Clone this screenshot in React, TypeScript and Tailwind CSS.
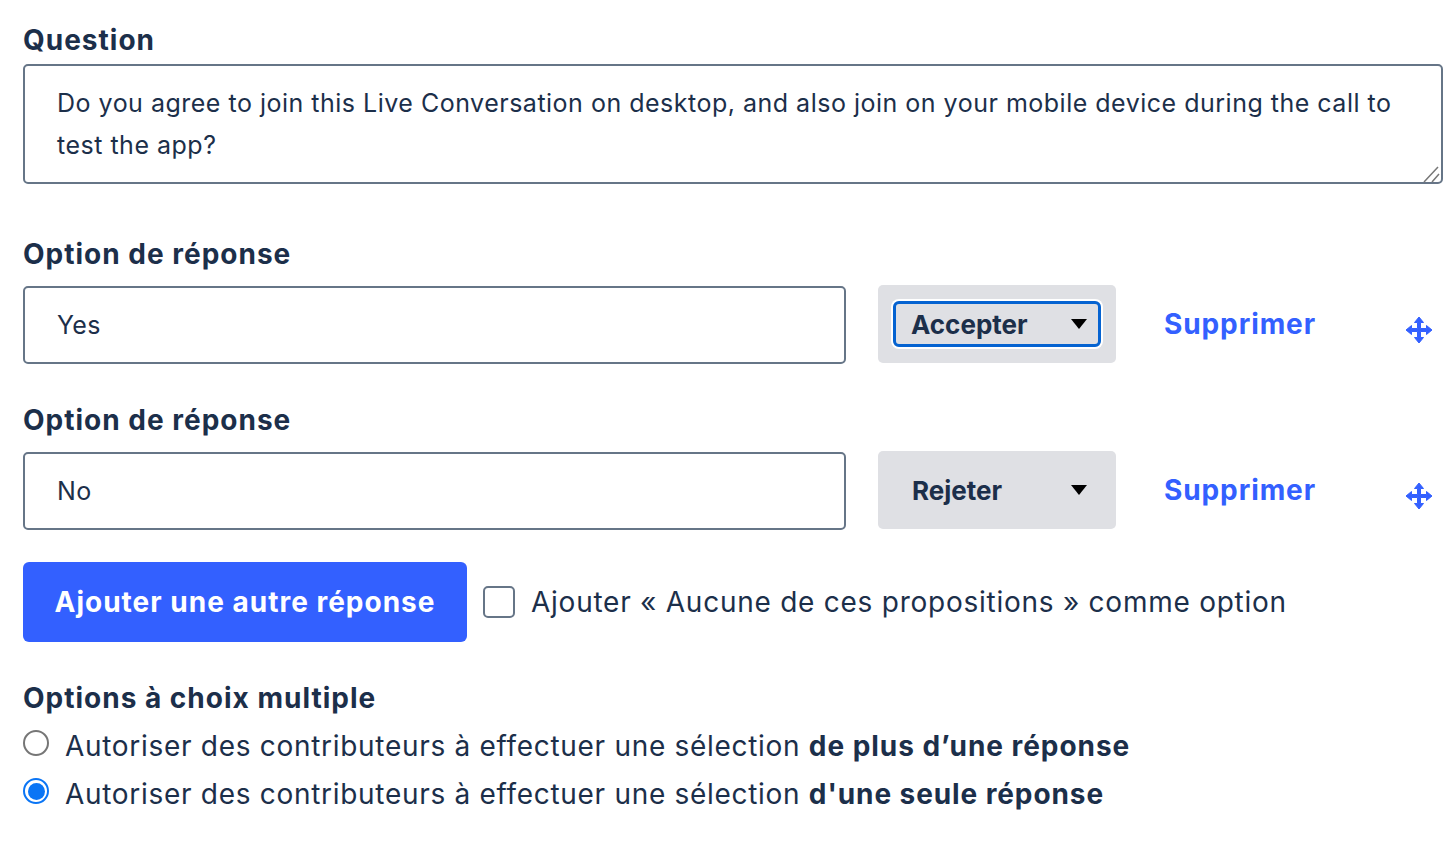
const FONT = "font-['Inter','Liberation_Sans',sans-serif]";

function MoveGlyph() {
  return (
    <svg viewBox="0 0 28 28" className="h-7 w-7 text-[#3360ff]" fill="currentColor" aria-hidden="true">
      <path
        stroke="currentColor"
        strokeWidth="1"
        strokeLinejoin="round"
        d="M14 1 L18.5 6.5 H15.5 V12.5 H21.5 V9.5 L27 14 L21.5 18.5 V15.5 H15.5 V21.5 H18.5 L14 27 L9.5 21.5 H12.5 V15.5 H6.5 V18.5 L1 14 L6.5 9.5 V12.5 H12.5 V6.5 H9.5 Z"
      />
    </svg>
  );
}

function Caret() {
  return (
    <svg viewBox="0 0 16 10" className="h-[10px] w-4" aria-hidden="true">
      <path d="M0 0 H16 L8 10 Z" fill="#000" />
    </svg>
  );
}

function AnswerRow({ value, verdict, focused }: { value: string; verdict: string; focused?: boolean }) {
  return (
    <div>
      <label className="block text-[28px] leading-[36px] font-bold tracking-[1px] text-[#1c2f4a]">Option de réponse</label>
      <div className="mt-[13px] flex items-center">
        <input
          readOnly
          value={value}
          className="-mb-px h-[78px] w-[823px] self-end rounded-[5px] border-2 border-[#667587] bg-white px-[32px] text-[25px] tracking-[0.3px] text-[#1c2f4a] outline-none"
        />
        <div className="ml-[32px] flex h-[78px] w-[238px] items-center justify-center rounded-[5px] bg-[#dfe0e4]">
          <div
            className={
              focused
                ? "flex h-[46px] w-[208px] items-center justify-between rounded-[6px] border-[3px] border-[#0563d1] pl-[15px] pr-[11px] shadow-[0_0_0_2px_#fff]"
                : "flex h-[46px] w-[208px] items-center justify-between pl-[19px] pr-[14px]"
            }
          >
            <span className="text-[26px] font-bold text-[#1c2f4a]">{verdict}</span>
            <Caret />
          </div>
        </div>
        <a className="ml-[48px] w-[241px] text-[28px] font-bold tracking-[0.9px] text-[#3360ff]">Supprimer</a>
        <span className="mt-[12px]">
          <MoveGlyph />
        </span>
      </div>
    </div>
  );
}

export default function App() {
  return (
    <div className={`${FONT} min-h-[842px] bg-white pl-[23px] pr-[13px] pt-[22px] text-[#1c2f4a]`}>
      <label className="block text-[28px] leading-[36px] font-bold tracking-[1px]">Question</label>
      <div className="relative mt-[6px]">
        <textarea
          readOnly
          value="Do you agree to join this Live Conversation on desktop, and also join on your mobile device during the call to test the app?"
          className="block h-[120px] w-full resize-none rounded-[5px] border-2 border-[#667587] bg-white px-[32px] py-[16px] text-[25px] leading-[42px] tracking-[0.5px] outline-none"
        />
        <svg viewBox="0 0 18 18" className="absolute bottom-[1px] right-[2px] h-[18px] w-[18px]" aria-hidden="true">
          <path d="M1 17 L15 2 M9 17 L16 9" stroke="#777" strokeWidth="1.5" fill="none" />
        </svg>
      </div>
      <div className="mt-[52px]">
        <AnswerRow value="Yes" verdict="Accepter" focused />
      </div>
      <div className="mt-[39px]">
        <AnswerRow value="No" verdict="Rejeter" />
      </div>
      <div className="mt-[33px] flex items-center">
        <button className="h-[80px] w-[444px] rounded-[6px] bg-[#3360ff] text-[28px] font-bold tracking-[1px] text-white">
          Ajouter une autre réponse
        </button>
        <span className="ml-[16px] h-[32px] w-[32px] rounded-[5px] border-2 border-[#667587] bg-white" />
        <span className="ml-[16px] text-[28px] tracking-[0.75px]">Ajouter « Aucune de ces propositions » comme option</span>
      </div>
      <div className="mt-[38px] text-[28px] leading-[36px] font-bold tracking-[1px]">Options à choix multiple</div>
      <div className="mt-[12px] flex h-[36px] items-center">
        <span className="mb-[6px] h-[26px] w-[26px] rounded-full border-2 border-[#767676] bg-white" />
        <span className="ml-[16px] text-[28px] tracking-[0.7px]">
          Autoriser des contributeurs à effectuer une sélection <b className="tracking-[0.95px]">de plus d’une réponse</b>
        </span>
      </div>
      <div className="mt-[12px] flex h-[36px] items-center">
        <span className="mb-[6px] flex h-[26px] w-[26px] items-center justify-center rounded-full border-2 border-[#0a75f5] bg-white">
          <span className="h-[17px] w-[17px] rounded-full bg-[#0a75f5]" />
        </span>
        <span className="ml-[16px] text-[28px] tracking-[0.7px]">
          Autoriser des contributeurs à effectuer une sélection <b className="tracking-[0.9px]">d'une seule réponse</b>
        </span>
      </div>
    </div>
  );
}
